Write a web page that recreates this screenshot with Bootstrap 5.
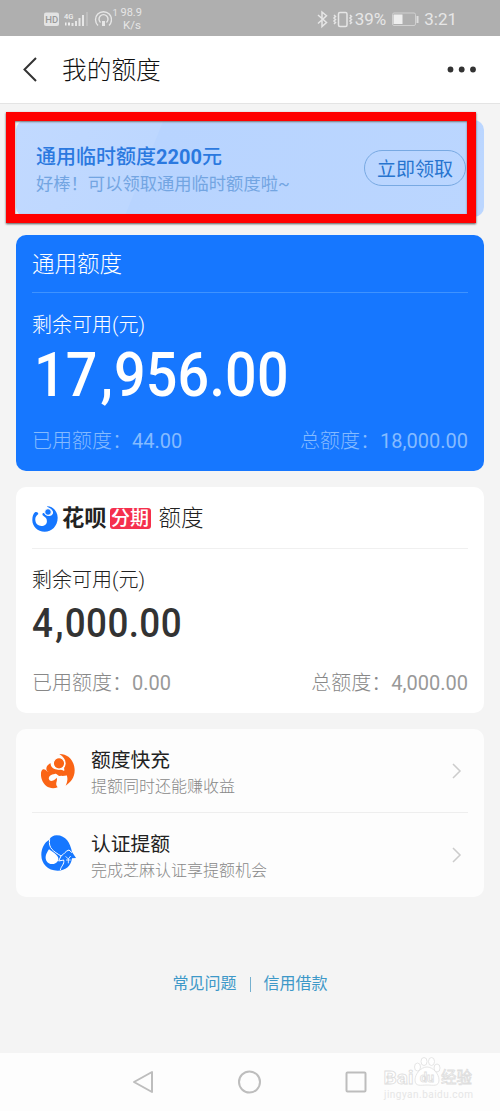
<!DOCTYPE html>
<html lang="zh-CN">
<head>
<meta charset="utf-8">
<meta name="viewport" content="width=device-width, initial-scale=1">
<title>我的额度</title>
<link href="https://cdn.jsdelivr.net/npm/bootstrap@5.3.0/dist/css/bootstrap.min.css" rel="stylesheet">
<style>
body{background:#f4f4f4;color:#333;font-family:Roboto,"Noto Sans CJK SC",sans-serif;font-weight:400;overflow-x:hidden}
svg{display:block;flex:none}
.phone{width:500px;height:1111px;overflow:hidden}
.status{height:36px;background:#afafaf;color:#e6e6e6;padding:1px 43px 0 44px}
.status .clock{font-size:17px;line-height:36px}
.status .pct{font-size:17px;margin-left:1px}
.titlebar{height:68px;background:#fff;border-bottom:1px solid #e4e4e4;padding:0 24px 0 22px}
.titlebar h1{font-size:24.7px;line-height:66px;color:#111;font-weight:300;margin:2px 0 0 23px}
.content{padding:16px 16px 0}
.panel{border:0;border-radius:10px}
.promo{height:97px;background:linear-gradient(112deg,#c1d9ff 0,#bdd7ff 29%,#b8d4ff 29.2%,#bbd6ff 100%);padding:24px 18px 0 20px}
.promo .head{font-size:20px;line-height:27px;font-weight:500;color:#2b79df}
.promo .note{font-size:17.3px;line-height:28px;color:#73a5e2}
.promo .note{margin-top:-1px}
.btn.claim{width:102px;height:36px;margin-top:6px;padding:2px 0 0;border:1px solid #78a9e2;border-radius:18px;color:#2774cf;font-size:19px;line-height:33px}
.marker{left:-10px;top:-8px;width:470px;height:111px;border:9px solid #f00;box-shadow:0 1px 2px #555,inset 0 1px 2px #777}
.quota{padding:0 16px;height:226px}
.quota .top{height:62px;border-bottom:1px solid #f0f0f0;font-size:22.5px;font-weight:300;padding-top:2px}
.quota .lbl{font-size:20px;line-height:28px;margin-top:17px;font-weight:300}
.quota .sum{font-weight:500;white-space:nowrap;transform:scaleX(.92);transform-origin:0 50%}
.quota .sum i{font-style:normal;margin:0 1px 0 3px}
.quota .foot{font-size:20px;line-height:26px;color:#999}
.quota .foot span{font-weight:300}
.quota .foot b{font-weight:400}
.main-q{height:236px;background:#1677ff;color:#fff;margin-top:18px}
.main-q .top{height:58px;border-color:#3f93ff}
.main-q .lbl{margin-top:18px}
.main-q .sum{font-size:60.5px;line-height:72px;letter-spacing:.2px;color:#fff;margin:1px 0 0 2px}
.main-q .foot{margin-top:16px;color:#85bbff}
.sub-q{margin-top:16px;background:#fff;color:#222}
.sub-q .sum{font-size:40px;line-height:50px;letter-spacing:.45px;margin-top:5px;color:#333}
.sub-q .sum i{margin:0 1px 0 2px}
.sub-q .foot{margin-top:21px}
.sub-q .foot span{color:#888}
.sub-q .foot b{color:#999}
.brand{font-size:22.3px;font-weight:700;color:#222;margin-left:4px}
.tag{background:#f5304d;color:#fff;font-size:19px;line-height:21px;width:41px;height:21px;border-radius:3px;text-align:center;font-weight:500;margin-left:3px}
.entries{margin-top:16px;height:168px;padding:0 16px;background:#fdfdfd}
.entry{height:84px;background:transparent;border-color:#eee!important;padding:0 6px 0 9px}
.entry .name{font-size:19.8px;line-height:27px;color:#222}
.entry .desc{font-size:16px;line-height:26px;color:#888;font-weight:300}
.entry .txt{width:360px;margin:5px 0 0 16px}
.entry+.entry .txt{margin:4px 0 0 15px}
.links{margin-top:74px;font-size:16px;line-height:26px}
.links a{color:#3d98c8;text-decoration:none}
.links i{width:1px;height:15px;background:#75b0cf;margin:0 13px}
.sysnav{height:58px;background:#fdfdfd}
.keys{padding:0 133px}
.mark-logo{right:25px;top:2px}
</style>
</head>
<body>
<main class="phone d-flex flex-column">
  <div class="status d-flex justify-content-between align-items-center">
    <div class="d-flex align-items-center">
      <svg width="68" height="22" viewBox="44 7 68 22">
        <rect x="44" y="11.500" width="15" height="13.500" rx="2" fill="#e3e3e3"/>
        <text x="45.300" y="22" font-size="9.500" font-weight="500" fill="#999">HD</text>
        <text x="64" y="17.500" font-size="7.500" font-weight="500" fill="#eee">4G</text>
        <path d="M65 23h1.500M68 23h2" stroke="#eee" stroke-width="3"/>
        <path d="M72.500 25v-3M76 25v-5M79.500 25v-8M83 25v-11" stroke="#e6e6e6" stroke-width="2"/>
        <path d="M87 25V11" stroke="#c2c2c2" stroke-width="1.500"/>
        <g fill="none" stroke="#e6e6e6" stroke-width="1.400"><path d="M98 24.500a8 8 0 1 1 11 0"/><path d="M100.500 21.500a4.500 4.500 0 1 1 6 0"/><path d="M103.500 25v-5" stroke-width="3"/></g>
      </svg>
      <svg width="32" height="30" viewBox="112 3 32 30"><g fill="#e6e6e6"><text x="112.500" y="15" font-size="9.500">1</text><text x="120.500" y="15" font-size="11">98.9</text><text x="123" y="28" font-size="11.500">K/s</text></g></svg>
    </div>
    <div class="clock d-flex align-items-center">
      <svg width="38" height="20" viewBox="319 8 38 20" fill="none" stroke="#e6e6e6" stroke-width="1.500">
        <path d="M321 14l8.500 7.500-4.500 4V11l4.500 3.800L321 22.500"/><rect x="341.500" y="11.500" width="8.500" height="14" rx="1.500"/><path d="M337 14l1.500 1.500L337 17l1.500 1.500-1.500 1.500 1.500 1.500L337 23M353 14l1.500 1.500L353 17l1.500 1.500-1.500 1.500 1.500 1.500L353 23"/>
      </svg>
      <span class="pct">39%</span>
      <svg class="ms-1" width="30" height="16" viewBox="0 0 30 16"><rect x="2.500" y="2" width="23" height="12.500" rx="1.500" fill="none" stroke="#d0d0d0"/><path d="M3.500 3.500h9v9.500h-9z" fill="#eee"/><path d="M27.500 5v7" stroke="#ddd" stroke-width="2"/></svg>
      <span class="ms-1">3:21</span>
    </div>
  </div>

  <header class="titlebar d-flex align-items-center">
    <svg width="17" height="26" viewBox="0 0 17 26" fill="none" stroke="#333" stroke-width="2"><path d="M14 1 2.500 12.500 14 24"/></svg>
    <h1>我的额度</h1>
    <svg class="ms-auto" width="29" height="7" viewBox="0 0 29 7" fill="#333"><circle cx="3.500" cy="3.500" r="2.900"/><circle cx="14.700" cy="3.500" r="2.900"/><circle cx="26" cy="3.500" r="2.900"/></svg>
  </header>

  <div class="content">
    <section class="panel promo position-relative d-flex justify-content-between">
      <div><div class="head">通用临时额度<b>2200</b>元</div><div class="note">好棒！可以领取通用临时额度啦~</div></div>
      <button class="btn claim flex-shrink-0" type="button">立即领取</button>
      <div class="marker position-absolute"></div>
    </section>

    <section class="card panel quota main-q">
      <div class="top d-flex align-items-center">通用额度</div>
      <div class="lbl">剩余可用(元)</div>
      <div class="sum">17<i>,</i>956.00</div>
      <div class="foot d-flex justify-content-between"><span>已用额度：<b>44.00</b></span><span>总额度：<b>18,000.00</b></span></div>
    </section>

    <section class="card panel quota sub-q">
      <div class="top d-flex align-items-center">
        <svg width="26" height="26" viewBox="95 75 78 78"><path d="M141 74C160 75 172 91 172 108c0 25-18 42-39 42-22 0-38-17-37-36 0-10 3-18 8-22 5-2 9 0 10 5-7 5-10 11-9 19 1 11 9 17 18 17 14 0 21-12 14-24l-10-8c-2-4 0-7 4-7 6 8 16 12 23 7 8-7 4-17-8-23-5-2-7-4-5-4z" transform="translate(0 2)" fill="#1677ff"/><circle cx="143" cy="93" r="10" fill="#1677ff" stroke="#fff" stroke-width="3"/></svg>
        <span class="brand">花呗</span><span class="tag">分期</span><span class="ms-2">额度</span>
      </div>
      <div class="lbl">剩余可用(元)</div>
      <div class="sum">4<i>,</i>000.00</div>
      <div class="foot d-flex justify-content-between"><span>已用额度：<b>0.00</b></span><span>总额度：<b>4,000.00</b></span></div>
    </section>

    <section class="panel entries list-group list-group-flush">
      <a class="list-group-item entry d-flex align-items-center" href="#">
        <svg width="34" height="36" viewBox="62 41 102 106"><path d="M117 43c28-1 46 23 46 49 0 22-12 36-27 46 7-16 6-24 3-31l-15 2c8-12 9-18 7-24 10-14 4-32-14-42zM66 90c5-3 10 0 14 5l20 2c4 0 6 3 3 6-13 2-20 8-17 16 3 9 14 5 23-5 4 12-7 15 3 29-21 8-40-3-47-22-4-11-5-25 1-31z" fill="#fa6415"/><path d="M91 71c-1 14 13 21 29 19 9-1 16 6 19 17l-23 2c-8-10-28-9-36-15-5-8 0-19 11-23z" fill="#fa6415"/><circle cx="116" cy="71" r="17" fill="#fa6415" stroke="#fff" stroke-width="3.500"/></svg>
        <div class="txt"><div class="name">额度快充</div><div class="desc">提额同时还能赚收益</div></div>
        <svg class="ms-auto" width="10" height="16" viewBox="0 0 10 16" fill="none" stroke="#ccc" stroke-width="1.500"><path d="m1 1 7 7-7 7"/></svg>
      </a>
      <a class="list-group-item entry d-flex align-items-center" href="#">
        <svg class="mb-1" width="35" height="36" viewBox="65 280 105 108"><path d="M112 281c28 0 41 24 46 50l12 18-12 1c-3 24-20 37-43 37-30 0-49-21-49-47 0-20 9-38 24-46 4-8 12-13 22-13z" fill="#1677ff"/><path d="M89 323c-9 13-13 24-8 34 7 13 27 14 35 0 7-13-14-25-27-34z" fill="#fff"/><path d="M91 293c-5 27 12 36 34 50 8-4 14-16 24-18l9 8M125 343l-7 15 15-3c3 13-8 18-10 30" fill="none" stroke="#fff" stroke-width="3"/><path d="m139 344 8 8 7-9m-7 9v13m-7-10h14" fill="none" stroke="#fff" stroke-width="2.500"/></svg>
        <div class="txt"><div class="name">认证提额</div><div class="desc">完成芝麻认证享提额机会</div></div>
        <svg class="ms-auto" width="10" height="16" viewBox="0 0 10 16" fill="none" stroke="#ccc" stroke-width="1.500"><path d="m1 1 7 7-7 7"/></svg>
      </a>
    </section>
    <div class="links d-flex justify-content-center align-items-center"><a href="#">常见问题</a><i></i><a href="#">信用借款</a></div>
  </div>

  <nav class="sysnav position-relative mt-auto">
    <div class="keys d-flex justify-content-between align-items-center h-100">
      <svg width="20" height="24" viewBox="0 0 20 24"><path d="M1 12 19 2v20z" fill="none" stroke="#bdbdbd" stroke-width="2" stroke-linejoin="round"/></svg>
      <svg width="24" height="24" viewBox="0 0 24 24"><circle cx="12.500" cy="12" r="10.500" fill="none" stroke="#bdbdbd" stroke-width="2"/></svg>
      <svg width="22" height="22" viewBox="0 0 22 22"><rect x="1.500" y="1.500" width="19" height="19" rx="1" fill="none" stroke="#bdbdbd" stroke-width="2"/></svg>
    </div>
    <div class="mark-logo position-absolute">
      <svg width="93" height="48" viewBox="382 1055 93 48">
        <g fill="#fff" stroke="#dedede" stroke-width=".8"><text x="383.500" y="1084" font-size="19" font-weight="700" textLength="30" lengthAdjust="spacingAndGlyphs">Bai</text><path d="M427 1067c6 0 12 7 12 13 0 7-6 5-12 5s-12 2-12-5c0-6 6-13 12-13z"/><ellipse cx="417.500" cy="1067" rx="3" ry="4"/><ellipse cx="424" cy="1061.500" rx="3" ry="4"/><ellipse cx="431.500" cy="1061.500" rx="3" ry="4"/><ellipse cx="437" cy="1068" rx="3" ry="4"/><text x="420" y="1082" font-size="12.500" font-weight="700">du</text><text x="441" y="1083" font-size="15.500" font-weight="400">经验</text></g>
        <text x="384" y="1097.500" font-size="10" fill="#e6e6e6" textLength="89">jingyan.baidu.com</text>
      </svg>
    </div>
  </nav>
</main>
<script src="https://cdn.jsdelivr.net/npm/bootstrap@5.3.0/dist/js/bootstrap.bundle.min.js"></script>
</body>
</html>
